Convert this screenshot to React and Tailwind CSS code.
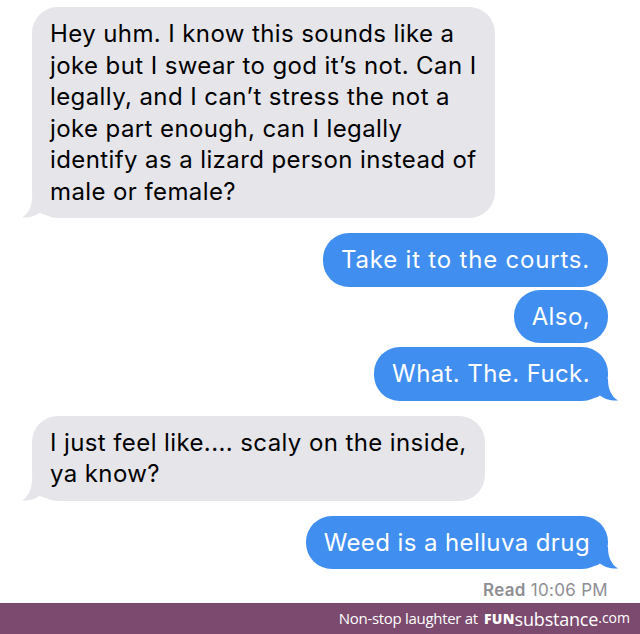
import React from "react";

// little tail under the last bubble of a run
function Tail({ side, color }) {
    if (side === "left")
        return (
            <svg
                className="absolute left-[-10px] bottom-0"
                width="26"
                height="22"
                viewBox="0 0 26 22"
            >
                <path
                    d="M10 0 C10 10 7 17 0 21.5 C7 22 14 20 18 16.5 C20 18 22 19 26 19 L26 0 Z"
                    fill={color}
                />
            </svg>
        );
    return (
        <svg
            className="absolute right-[-10px] bottom-0"
            width="26"
            height="22"
            viewBox="0 0 26 22"
        >
            <path
                d="M16 0 C16 10 19 17 26 21.5 C19 22 12 20 8 16.5 C6 18 4 19 0 19 L0 0 Z"
                fill={color}
            />
        </svg>
    );
}

function Bubble({ mine, tail, className = "", children }) {
    const color = mine ? "#3f8ef0" : "#e5e5ea";
    return (
        <div
            className={`flex ${mine ? "justify-end pr-8" : "justify-start pl-8"} ${className}`}
        >
            <div
                className={`relative rounded-[26px] px-[18px] py-[11px] text-[24px] tracking-[0.4px] leading-[31.5px] ${
                    mine ? "bg-[#3f8ef0] text-white" : "bg-[#e5e5ea] text-black"
                }`}
            >
                {tail && <Tail side={mine ? "right" : "left"} color={color} />}
                <div className="relative">{children}</div>
            </div>
        </div>
    );
}

export default function App() {
    return (
        <div className="h-[634px] w-[640px] bg-white flex flex-col font-['Inter',sans-serif] overflow-hidden">
            <div className="pt-[7px]">
                <Bubble tail>
                    Hey uhm. I know this sounds like a<br />
                    joke but I swear to god it’s not. Can I<br />
                    legally, and I can’t stress the not a<br />
                    joke part enough, can I legally<br />
                    identify as a lizard person instead of<br />
                    male or female?
                </Bubble>

                <Bubble mine className="mt-[15px]">
                    <span className="tracking-[0.8px]">Take it to the courts.</span>
                </Bubble>
                <Bubble mine className="mt-[3px]">
                    Also,
                </Bubble>
                <Bubble mine tail className="mt-[4px]">
                    What. The. Fuck.
                </Bubble>

                <Bubble tail className="mt-[15px]">
                    I just feel like.... scaly on the inside,
                    <br />
                    ya know?
                </Bubble>

                <Bubble mine tail className="mt-[15px]">
                    Weed is a helluva drug
                </Bubble>

                <div className="mt-[11px] pr-8 text-right text-[17px] leading-[20px] tracking-[0.3px] text-[#8e8e93]">
                    <span className="font-semibold">Read</span> 10:06 PM
                </div>
            </div>

            {/* watermark strip */}
            <div className="mt-auto h-[31px] bg-[#7b4a6e] flex items-center justify-end pr-[10px] text-white font-['Open_Sans',sans-serif]">
                <span className="text-[15px] tracking-[-0.3px] mr-[6px]">
                    Non-stop laughter at
                </span>
                <span className="text-[14px] font-extrabold tracking-[0.3px]">
                    FUN
                </span>
                <span className="text-[18px] leading-none tracking-[-0.2px]">
                    substance
                </span>
                <span className="text-[14px] self-end mb-[6px]">.com</span>
            </div>
        </div>
    );
}
